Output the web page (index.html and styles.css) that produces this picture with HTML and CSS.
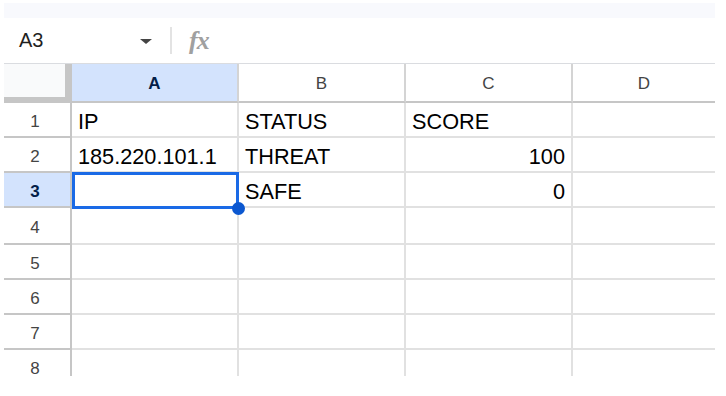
FILE: index.html
```html
<!DOCTYPE html>
<html>
  <head>
    <title>Sheet</title>
    <link rel="stylesheet" href="styles.css">
  </head>
  <body>
    <div class="app">
      <div class="topstrip"></div>

      <div class="formula-bar">
        <div class="name-box">A3</div>
        <span class="arrow"></span>
        <span class="divider"></span>
        <span class="fx">fx</span>
      </div>

      <div class="grid">
        <div class="row head">
          <div class="corner"></div>
          <div class="col-head active">A</div>
          <div class="col-head">B</div>
          <div class="col-head">C</div>
          <div class="col-head last">D</div>
        </div>

        <div class="row">
          <div class="row-head">1</div>
          <div class="cell">IP</div>
          <div class="cell">STATUS</div>
          <div class="cell">SCORE</div>
          <div class="cell last"></div>
        </div>
        <div class="row">
          <div class="row-head">2</div>
          <div class="cell">185.220.101.1</div>
          <div class="cell">THREAT</div>
          <div class="cell num">100</div>
          <div class="cell last"></div>
        </div>
        <div class="row">
          <div class="row-head active">3</div>
          <div class="cell selected"><div class="sel"></div></div>
          <div class="cell">SAFE</div>
          <div class="cell num">0</div>
          <div class="cell last"></div>
        </div>
        <div class="row tall">
          <div class="row-head">4</div>
          <div class="cell"></div>
          <div class="cell"></div>
          <div class="cell"></div>
          <div class="cell last"></div>
        </div>
        <div class="row">
          <div class="row-head">5</div>
          <div class="cell"></div>
          <div class="cell"></div>
          <div class="cell"></div>
          <div class="cell last"></div>
        </div>
        <div class="row">
          <div class="row-head">6</div>
          <div class="cell"></div>
          <div class="cell"></div>
          <div class="cell"></div>
          <div class="cell last"></div>
        </div>
        <div class="row">
          <div class="row-head">7</div>
          <div class="cell"></div>
          <div class="cell"></div>
          <div class="cell"></div>
          <div class="cell last"></div>
        </div>
        <div class="row">
          <div class="row-head">8</div>
          <div class="cell"></div>
          <div class="cell"></div>
          <div class="cell"></div>
          <div class="cell last"></div>
        </div>
      </div>
    </div>
  </body>
</html>
```

FILE: styles.css
```css
* {
  box-sizing: border-box;
}

body {
  margin: 0;
  background: #fff;
  font-family: "Liberation Sans", Arial, sans-serif;
}

.app {
  width: 711px;
  margin-left: 4px;
}

.topstrip {
  height: 15px;
  margin-top: 3px;
  background-color: #f8f9fd;
}

/* name box + fx */
.formula-bar {
  height: 45px;
  display: flex;
  align-items: center;
  padding-left: 15px;
}

.name-box {
  width: 121px;
  font-size: 20px;
  color: #1f1f1f;
}

.arrow {
  width: 0;
  height: 0;
  border-left: 6px solid transparent;
  border-right: 6px solid transparent;
  border-top: 5px solid #444;
  margin-top: 1px;
}

.divider {
  width: 2px;
  height: 27px;
  margin-left: 18px;
  background-color: #e3e3e3;
}

.fx {
  margin-left: 17px;
  font-family: "Liberation Serif", serif;
  font-style: italic;
  font-weight: bold;
  font-size: 26px;
  color: #a0a0a0;
  letter-spacing: -1px;
}

/* grid */
.grid {
  height: 313px;
  overflow: hidden;
  border-top: 1px solid #dadce0;
}

.row {
  display: grid;
  grid-template-columns: 68px 167px 167px 167px 142px;
  height: 35px;
}

.row.head {
  height: 39px;
}

.row.tall {
  height: 37px;
}

.corner {
  background-color: #f9fafb;
  border-right: 7px solid #c6c6c6;
  border-bottom: 6px solid #c6c6c6;
}

.col-head {
  display: flex;
  align-items: center;
  justify-content: center;
  padding-top: 3px;
  font-size: 17px;
  color: #444;
  border-right: 2px solid #d4d4d4;
  border-bottom: 2px solid #c6c6c6;
}

.col-head.active,
.row-head.active {
  background-color: #d3e3fd;
  color: #041e49;
  font-weight: bold;
}

.row-head {
  display: flex;
  align-items: center;
  justify-content: center;
  padding: 4px 4px 0 0;
  font-size: 17px;
  color: #444;
  border-right: 2px solid #c6c6c6;
  border-bottom: 2px solid #c6c6c6;
}

.cell {
  display: flex;
  align-items: center;
  padding: 4px 6px 0 6px;
  font-size: 21.7px;
  color: #000;
  white-space: nowrap;
  border-right: 2px solid #e1e1e1;
  border-bottom: 2px solid #e1e1e1;
}

.cell.num {
  justify-content: flex-end;
}

.cell.last,
.col-head.last {
  border-right: none;
}

.cell.selected {
  position: relative;
}

.sel {
  position: absolute;
  top: -1px;
  left: 0;
  right: -2px;
  bottom: -3px;
  border: 3px solid #1a6ae6;
  z-index: 2;
}

.sel::after {
  content: "";
  position: absolute;
  right: -9px;
  bottom: -9px;
  width: 13px;
  height: 13px;
  border-radius: 50%;
  background-color: #0b57d0;
}
```
